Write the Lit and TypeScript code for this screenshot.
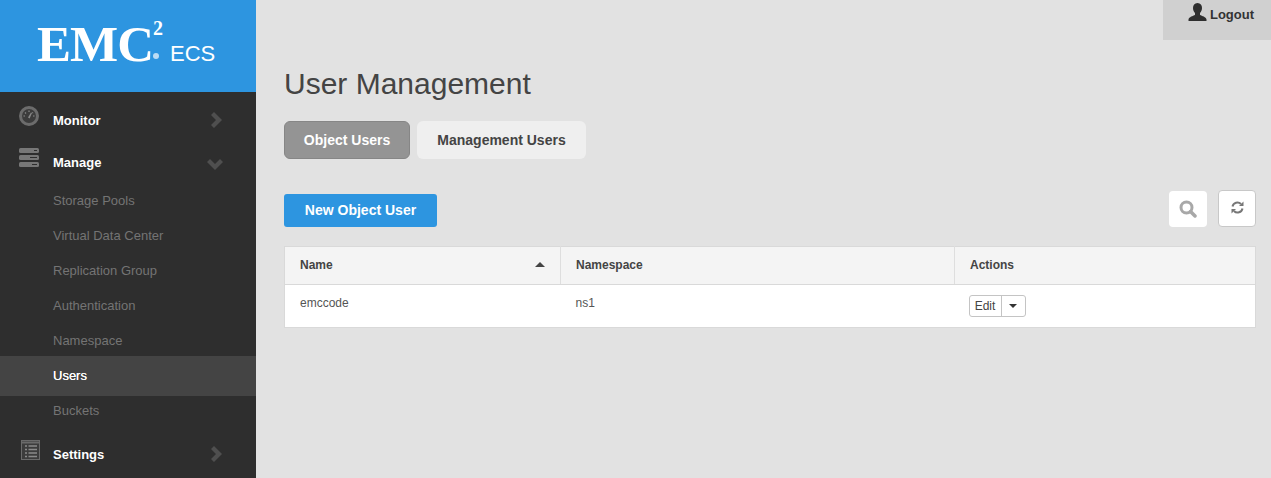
import { LitElement, html, css } from "lit";
import { customElement } from "lit/decorators.js";

const chevronRight = html`<svg class="chev" width="12" height="16" viewBox="0 0 12 16"><path d="M1 3l3-3 8 8-8 8-3-3 5-5z" /></svg>`;
const chevronDown = html`<svg class="chev down" width="16" height="12" viewBox="0 0 16 12"><path d="M3 1L0 4l8 8 8-8-3-3-5 5z" /></svg>`;

@customElement("app-root")
export class AppRoot extends LitElement {
	static styles = css`
		:host {
			display: flex;
			height: 478px;
			overflow: hidden;
			background: #e2e2e2;
			color: #444;
			font-family: "Liberation Sans", Arial, sans-serif;
			font-size: 13px;
		}

		.side {
			width: 256px;
			flex: none;
			background: #2e2e2e;
		}
		.logo {
			height: 92px;
			background: #2d95e0;
			color: #fff;
			display: flex;
			align-items: flex-start;
			padding: 15px 0 0 37px;
			box-sizing: border-box;
		}
		.emc {
			font-family: "Liberation Serif", serif;
			font-weight: bold;
			font-size: 51px;
			line-height: 58px;
			letter-spacing: -1px;
		}
		.two {
			font-family: "Liberation Serif", serif;
			font-weight: bold;
			font-size: 20px;
			line-height: 20px;
			margin-top: 3px;
		}
		.reg {
			width: 6px;
			height: 6px;
			border-radius: 50%;
			background: #bcdcf4;
			margin: 38px 0 0 -10px;
		}
		.ecs {
			font-size: 22px;
			line-height: 24px;
			margin: 27px 0 0 11px;
		}

		.head {
			display: flex;
			align-items: center;
			height: 42px;
			position: relative;
			padding-left: 53px;
			font-weight: bold;
			color: #fff;
		}
		.head .ico {
			position: absolute;
			left: 19px;
			top: 7px;
		}
		.head .chev {
			position: absolute;
			right: 34px;
			fill: #4f4f4f;
		}
		.head .chev.down {
			right: 33px;
			top: 17px;
		}
		.nav {
			padding-top: 7px;
		}
		.sub {
			height: 35px;
			line-height: 35px;
			padding-left: 53px;
			color: #747474;
		}
		.sub.active {
			height: 40px;
			line-height: 40px;
			margin: -2px 0 -3px;
			background: #444;
			color: #fff;
			text-shadow: 0 0 0.5px #fff;
		}
		.head.last {
			margin-top: 5px;
		}
		.head.last .ico {
			left: 21px;
		}

		.main {
			flex: 1;
			min-width: 0;
			padding: 0 15px 0 28px;
			position: relative;
		}
		.logout {
			position: absolute;
			top: 0;
			right: 0;
			width: 108px;
			height: 40px;
			background: #d0d0d0;
			display: flex;
			justify-content: center;
			gap: 3px;
			padding: 2px 0 0 8px;
			box-sizing: border-box;
			font-weight: bold;
			color: #333;
		}
		.logout span {
			margin-top: 5px;
		}
		h1 {
			margin: 0;
			padding-top: 66px;
			font-size: 30px;
			line-height: 36px;
			font-weight: normal;
			color: #444;
		}
		.tabs {
			display: flex;
			gap: 7px;
			margin-top: 19px;
		}
		.tab {
			height: 38px;
			line-height: 38px;
			box-sizing: border-box;
			border-radius: 6px;
			font-size: 14px;
			font-weight: bold;
			text-align: center;
			background: #efefef;
			width: 169px;
		}
		.tab.on {
			width: 126px;
			line-height: 36px;
			background: #949494;
			border: 1px solid #868686;
			color: #fff;
		}
		.bar {
			display: flex;
			align-items: flex-start;
			margin-top: 32px;
		}
		.new {
			margin-top: 3px;
			width: 153px;
			height: 33px;
			line-height: 33px;
			background: #2d95e0;
			color: #fff;
			font-size: 14px;
			font-weight: bold;
			text-align: center;
			border-radius: 3px;
		}
		.tool {
			width: 38px;
			height: 36px;
			margin-left: 11px;
			box-sizing: border-box;
			border-radius: 4px;
			background: #fff;
			display: flex;
			align-items: center;
			justify-content: center;
		}
		.tool.search {
			margin-left: auto;
		}
		.tool.refresh {
			height: 37px;
			margin-top: -1px;
			padding-bottom: 2px;
			border: 1px solid #c8c8c8;
		}

		table {
			width: 972px;
			margin-top: 19px;
			border: 1px solid #d9d9d9;
			border-collapse: collapse;
			table-layout: fixed;
			background: #fff;
		}
		th {
			height: 38px;
			padding: 0 15px 1px;
			box-sizing: border-box;
			text-align: left;
			font-size: 12px;
			background: #f4f4f4;
			border-bottom: 1px solid #d9d9d9;
			border-left: 1px solid #dedede;
			position: relative;
		}
		th:first-child {
			border-left: 0;
		}
		.sort {
			position: absolute;
			right: 15px;
			top: 15px;
			width: 0;
			height: 0;
			border: 5px solid transparent;
			border-top: 0;
			border-bottom: 5px solid #444;
		}
		td {
			height: 43px;
			padding: 0 15px 7px;
			box-sizing: border-box;
			font-size: 12px;
			color: #555;
		}
		td.act {
			padding-bottom: 0;
		}
		.split {
			display: inline-flex;
			height: 22px;
			border: 1px solid #c4c4c4;
			border-radius: 3px;
			box-sizing: border-box;
			margin-left: -1px;
			color: #444;
		}
		.split .edit {
			width: 31px;
			line-height: 20px;
			text-align: center;
			border-right: 1px solid #c4c4c4;
		}
		.split .drop {
			width: 23px;
			display: flex;
			align-items: center;
			justify-content: center;
		}
		.split .drop i {
			border: 4px solid transparent;
			border-bottom: 0;
			border-top: 4px solid #333;
		}
	`;

	render() {
		return html`
			<div class="side">
				<div class="logo">
					<span class="emc">EMC</span>
					<span class="two">2</span>
					<span class="reg"></span>
					<span class="ecs">ECS</span>
				</div>
				<div class="nav">
					<div class="head">
						<svg class="ico" width="20" height="20" viewBox="0 0 20 20">
							<circle cx="10" cy="10" r="8.500" fill="#3c3c3c" stroke="#6c6c6c" stroke-width="3" />
							<path d="M9 11.500l3-5 1 .6-2.400 5.400z" fill="#8a8a8a" />
							<path d="M4.500 10h1.500M6 6.500l1 1M10 4.500v1.500M14 6.500l-.6.6M14 10h1.500" stroke="#8a8a8a" stroke-width="1.200" />
						</svg>
						Monitor ${chevronRight}
					</div>
					<div class="head">
						<svg class="ico" width="20" height="20" viewBox="0 0 20 20" style="top:6px">
							<rect y="1" width="20" height="5" rx="1.500" fill="#777" />
							<rect y="8" width="20" height="5" rx="1.500" fill="#777" />
							<rect y="15" width="20" height="5" rx="1.500" fill="#777" />
							<path d="M15 3.500h3M11 10.500h7M13 17.500h5" stroke="#2e2e2e" />
						</svg>
						Manage ${chevronDown}
					</div>
					<div class="sub">Storage Pools</div>
					<div class="sub">Virtual Data Center</div>
					<div class="sub">Replication Group</div>
					<div class="sub">Authentication</div>
					<div class="sub">Namespace</div>
					<div class="sub active">Users</div>
					<div class="sub">Buckets</div>
					<div class="head last">
						<svg class="ico" width="19" height="20" viewBox="0 0 19 20">
							<rect x="0.500" y="0.500" width="18" height="19" fill="#3c3c3c" stroke="#6a6a6a" />
							<path d="M1 2.500h17" stroke="#6a6a6a" stroke-width="2" />
							<path d="M4 6h2M7.500 6H16M4 9.500h2M7.500 9.500H16M4 13h2M7.500 13H16M4 16.500h2M7.500 16.500H16" stroke="#8a8a8a" stroke-width="1.500" />
						</svg>
						Settings ${chevronRight}
					</div>
				</div>
			</div>
			<div class="main">
				<div class="logout">
					<svg width="19" height="20" viewBox="0 0 19 20">
						<path d="M9.500 1c3 0 4.500 2.200 4.500 5 0 2-.8 3.800-2 5v2c2 1 6 1.800 6.500 4.500V19H.5v-1.500C1 14.800 5 14 7 13v-2C5.800 9.800 5 8 5 6c0-2.800 1.500-5 4.500-5z" fill="#2e2e2e" />
					</svg>
					<span>Logout</span>
				</div>
				<h1>User Management</h1>
				<div class="tabs">
					<div class="tab on">Object Users</div>
					<div class="tab">Management Users</div>
				</div>
				<div class="bar">
					<div class="new">New Object User</div>
					<div class="tool search">
						<svg width="18" height="18" viewBox="0 0 18 18">
							<circle cx="7.500" cy="7.500" r="5.500" fill="none" stroke="#a8a8a8" stroke-width="3" />
							<path d="M11.500 11.500L16 16" stroke="#a8a8a8" stroke-width="3.500" stroke-linecap="round" />
						</svg>
					</div>
					<div class="tool refresh">
						<svg width="13" height="13" viewBox="0 0 13 13">
							<path d="M1.500 5.500A5 5 0 0 1 10 3" fill="none" stroke="#777" stroke-width="2" />
							<path d="M12.500 0.500v4.500H8z" fill="#777" />
							<path d="M11.500 7.500A5 5 0 0 1 3 10" fill="none" stroke="#777" stroke-width="2" />
							<path d="M0.500 12.500V8H5z" fill="#777" />
						</svg>
					</div>
				</div>
				<table>
					<colgroup>
						<col style="width:276px" />
						<col style="width:394px" />
						<col />
					</colgroup>
					<thead>
						<tr>
							<th>Name<span class="sort"></span></th>
							<th>Namespace</th>
							<th>Actions</th>
						</tr>
					</thead>
					<tbody>
						<tr>
							<td>emccode</td>
							<td>ns1</td>
							<td class="act">
								<span class="split">
									<span class="edit">Edit</span>
									<span class="drop"><i></i></span>
								</span>
							</td>
						</tr>
					</tbody>
				</table>
			</div>
		`;
	}
}
